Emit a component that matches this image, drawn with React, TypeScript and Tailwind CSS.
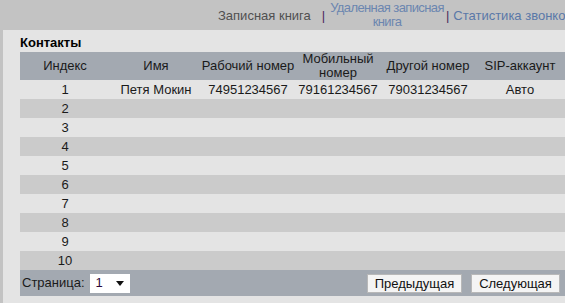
import React from "react";

const columns = [
  { label: ["Индекс"], w: "w-[90px]" },
  { label: ["Имя"], w: "w-[92px]" },
  { label: ["Рабочий номер"], w: "w-[92px]" },
  { label: ["Мобильный", "номер"], w: "w-[88px]" },
  { label: ["Другой номер"], w: "w-[92px]" },
  { label: ["SIP-аккаунт"], w: "w-[92px]" },
];

const rows = Array.from({ length: 10 }, (_, i) =>
  i === 0
    ? ["1", "Петя Мокин", "74951234567", "79161234567", "79031234567", "Авто"]
    : [String(i + 1), "", "", "", "", ""]
);

export default function App() {
  return (
    <div
      className="h-[303px] w-[565px] overflow-hidden bg-[#c3c3c3] text-[13px]"
      style={{ fontFamily: '"Liberation Sans", Arial, sans-serif' }}
    >
      {/* Tabs */}
      <div className="flex h-[30px] items-start whitespace-nowrap pl-[218px] leading-[14px]">
        <span className="mt-[9px] text-[#505050]">Записная книга</span>
        <span className="ml-[11px] mt-[9px] text-[#4b2a5e]">|</span>
        <span className="ml-[5px] mt-[1px] text-center leading-[14px] tracking-[-0.6px] text-[#6b86b0]">
          Удаленная записная
          <br />
          книга
        </span>
        <span className="ml-[2px] mt-[9px] text-[#4b2a5e]">|</span>
        <span className="ml-[4px] mt-[9px] text-[#5a78a8]">Статистика звонков</span>
      </div>

      {/* Panel */}
      <div className="ml-[3px] h-[273px] bg-[#e4e4e4] pl-[17px]">
        <div className="h-[22px] pt-[5px] font-bold leading-[15px] text-black">Контакты</div>
        <div className="w-[546px] text-[#1a1a1a]">
          <div className="flex h-[28px] bg-[#a3a9b1]">
            {columns.map((c) => (
              <div
                key={c.label[0]}
                className={`${c.w} flex flex-col items-center justify-center whitespace-nowrap text-center leading-[14px]`}
              >
                {c.label.map((l) => (
                  <span key={l}>{l}</span>
                ))}
              </div>
            ))}
          </div>
          {rows.map((r, i) => (
            <div
              key={i}
              className={`flex h-[19px] items-center ${i % 2 === 0 ? "bg-[#e4e4e4]" : "bg-[#cbcbcb]"}`}
            >
              {r.map((cell, j) => (
                <div key={j} className={`${columns[j].w} whitespace-nowrap text-center leading-[19px]`}>
                  {cell}
                </div>
              ))}
            </div>
          ))}
          {/* Footer */}
          <div className="flex h-[26px] items-center bg-[#a3a9b1] pl-[2px] pr-[6px]">
            <span>Страница:</span>
            <div className="ml-[5px] flex h-[19px] w-[40px] items-center justify-between bg-white pl-[6px] pr-[6px]">
              <span className="text-[#2a0a3a]">1</span>
              <svg width="8" height="5" viewBox="0 0 8 5">
                <path d="M0 0h8L4 5z" fill="#111" />
              </svg>
            </div>
            <div className="flex-1" />
            <button className="h-[19px] w-[95px] border border-[#b8b8b8] bg-[#f4f4f4] leading-[17px] text-[#111]">
              Предыдущая
            </button>
            <button className="ml-[9px] h-[19px] w-[89px] border border-[#b8b8b8] bg-[#f4f4f4] leading-[17px] text-[#111]">
              Следующая
            </button>
          </div>
        </div>
      </div>
    </div>
  );
}
